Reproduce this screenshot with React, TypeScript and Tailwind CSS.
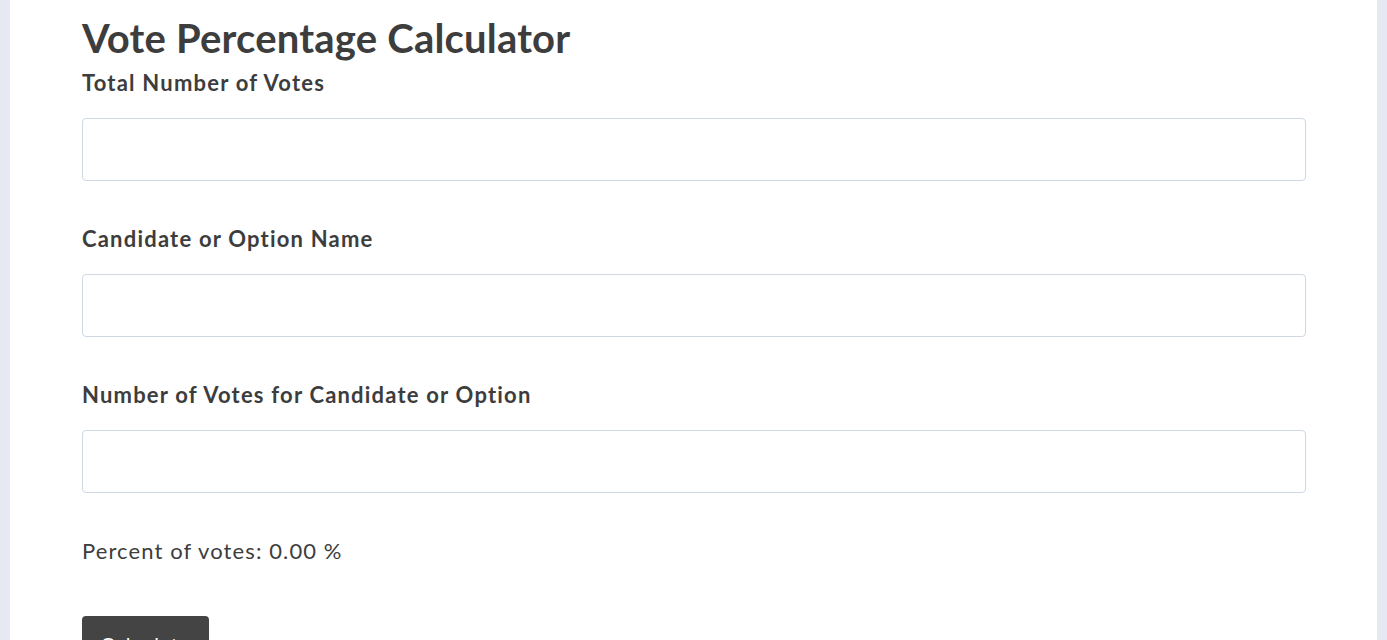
import React, { useState } from 'react';

const Field = ({ label, value, onChange, type = 'number' }: { label: string; value: string; onChange: (v: string) => void; type?: string }) => (
  <div>
    <label className="block text-[22px] font-bold leading-[30px] tracking-[1.2px] text-[#3d3d3d] mb-[20px]">{label}</label>
    <input
      type={type}
      value={value}
      onChange={(e) => onChange(e.target.value)}
      className="block w-full h-[63px] rounded-[4px] border border-[#cfd8e3] bg-white px-3 text-[20px] outline-none"
    />
  </div>
);

export default function App() {
  const [total, setTotal] = useState('');
  const [name, setName] = useState('');
  const [votes, setVotes] = useState('');
  const [pct, setPct] = useState('0.00');

  const calc = () => {
    const t = parseFloat(total);
    const v = parseFloat(votes);
    setPct(t > 0 && !isNaN(v) ? ((v / t) * 100).toFixed(2) : '0.00');
  };

  return (
    <div className="min-h-screen bg-[#e6e9f2] px-[10px]" style={{ fontFamily: 'Lato, "Open Sans", sans-serif' }}>
      <div className="min-h-screen bg-white pl-[72px] pr-[71px] pt-[14px] pb-[24px]">
        <h1 className="text-[40px] font-bold leading-[48px] tracking-[0.2px] text-[#3d3d3d] mb-[6px]">Vote Percentage Calculator</h1>
        <div className="flex flex-col gap-[43px]">
          <Field label="Total Number of Votes" value={total} onChange={setTotal} />
          <Field label="Candidate or Option Name" value={name} onChange={setName} type="text" />
          <Field label="Number of Votes for Candidate or Option" value={votes} onChange={setVotes} />
        </div>
        <p className="text-[22px] leading-[32px] tracking-[1.1px] text-[#3d3d3d] mt-[42px]">Percent of votes: {pct} %</p>
        <button
          type="button"
          onClick={calc}
          className="mt-[49px] h-[56px] w-[127px] rounded-[4px] bg-[#444444] text-white text-[20px] leading-[24px] tracking-[1px]"
        >
          Calculate
        </button>
      </div>
    </div>
  );
}
